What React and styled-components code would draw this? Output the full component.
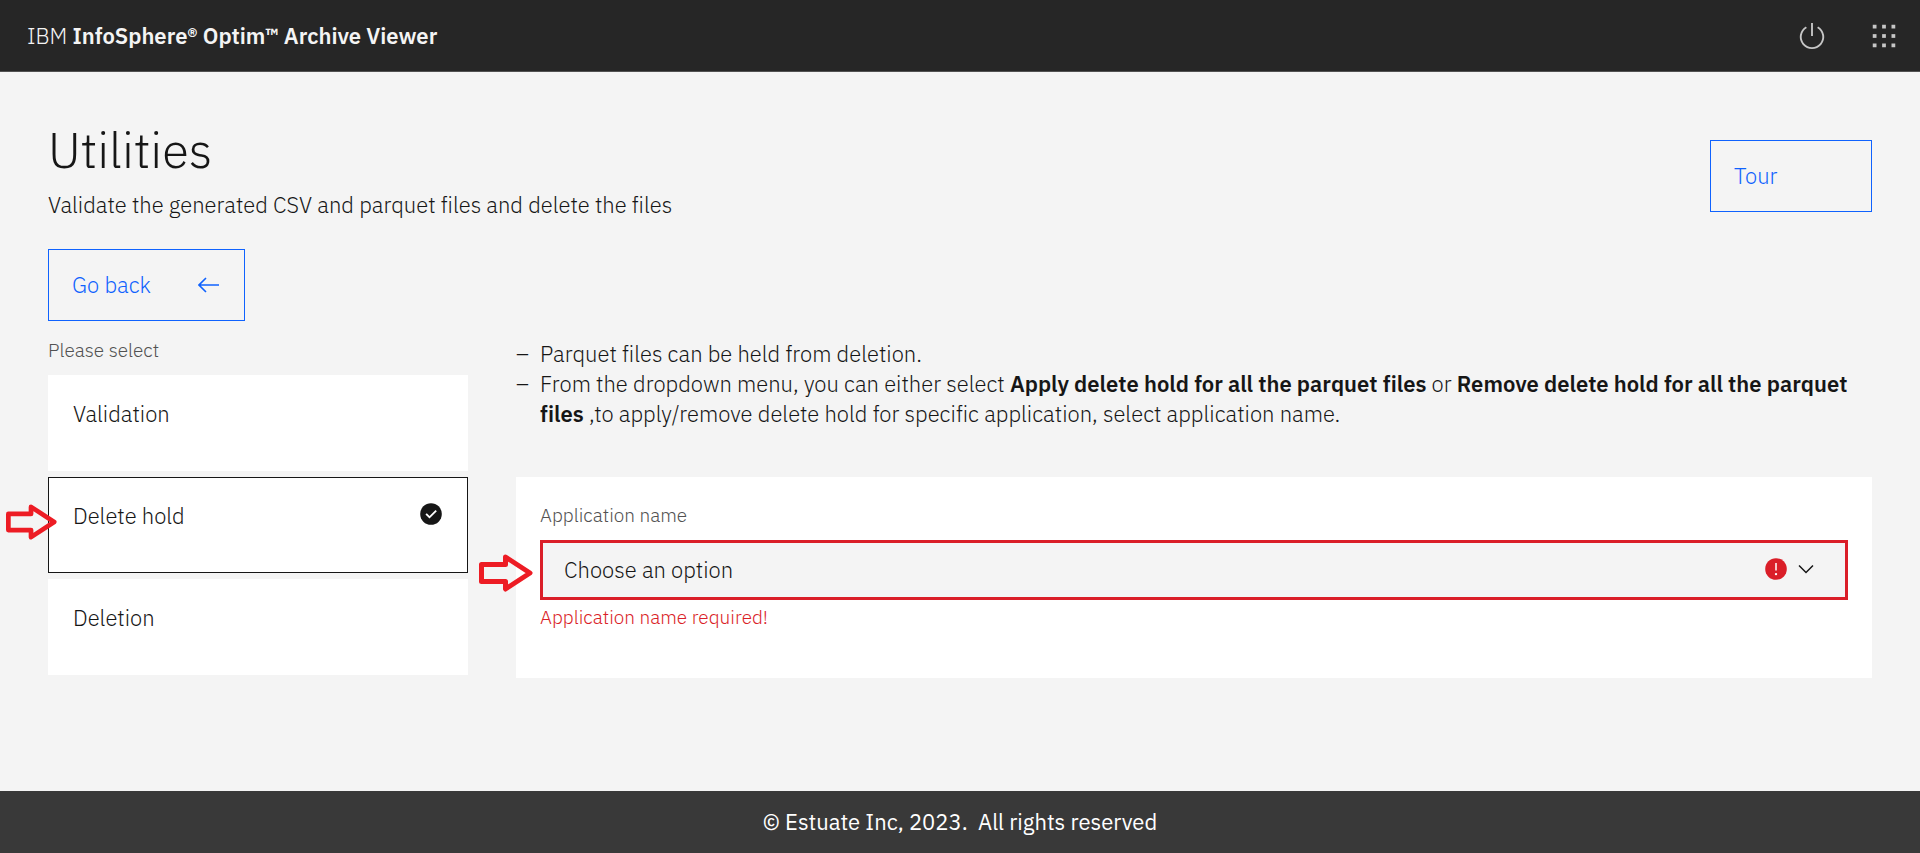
import React, { useState } from 'react';
import styled, { createGlobalStyle } from 'styled-components';

const GlobalStyle = createGlobalStyle`
  *, *::before, *::after { box-sizing: border-box; }
  body {
    margin: 0;
    background: #f4f4f4;
    color: #161616;
    font-family: "IBM Plex Sans", "Open Sans", "Noto Sans", sans-serif;
    font-size: 22px;
    font-weight: 300;
    line-height: 30px;
    font-variant-ligatures: none;
  }
  button, select { font: inherit; color: inherit; }
`;

const Page = styled.div`
  min-height: 100vh;
  display: flex;
  flex-direction: column;
`;

const Header = styled.header`
  display: flex;
  align-items: center;
  justify-content: space-between;
  height: 72px;
  padding-left: 27px;
  background: #262626;
  border-bottom: 1px solid #525252;
  color: #f4f4f4;
`;

const Product = styled.a`
  color: inherit;
  text-decoration: none;
`;

const Strong = styled.strong`
  font-weight: 600;
`;

const HeaderActions = styled.div`
  display: flex;
`;

const HeaderButton = styled.button`
  display: flex;
  align-items: center;
  justify-content: center;
  width: 72px;
  height: 72px;
  padding: 0;
  border: 0;
  background: transparent;
  color: #c6c6c6;
`;

const Main = styled.main`
  flex: 1;
  padding: 48px 48px 72px;
`;

const Intro = styled.div`
  display: flex;
  align-items: flex-start;
  justify-content: space-between;
  margin-bottom: 29px;
`;

const Title = styled.h1`
  margin: 0 0 10px;
  font-size: 49px;
  font-weight: 300;
  line-height: 60px;
`;

const Text = styled.p`
  margin: 0;
`;

const OutlineButton = styled.button`
  display: flex;
  align-items: center;
  justify-content: space-between;
  width: ${(p) => p.$width};
  height: 72px;
  margin-top: ${(p) => p.$top || '0'};
  padding: 0 25px 0 23px;
  border: 1px solid #0f62fe;
  background: transparent;
  color: #0f62fe;
`;

const Columns = styled.div`
  display: grid;
  grid-template-columns: repeat(16, minmax(0, 1fr));
  column-gap: 48px;
  margin-top: 18px;
`;

const TileGroup = styled.fieldset`
  grid-column: span 4;
  min-width: 0;
  margin: 0;
  padding: 0;
  border: 0;
`;

const Caption = styled.legend`
  margin-bottom: 14px;
  padding: 0;
  color: #525252;
  font-size: 19px;
  line-height: 22px;
`;

const Tiles = styled.div`
  display: grid;
  gap: 6px;
`;

const Tile = styled.label`
  position: relative;
  display: flex;
  align-items: flex-start;
  justify-content: space-between;
  height: 96px;
  padding: 24px;
  border: 1px solid ${(p) => (p.$selected ? '#161616' : '#ffffff')};
  background: #ffffff;
  line-height: 28px;
  cursor: pointer;
`;

const TileRadio = styled.input`
  position: absolute;
  inset: 0;
  margin: 0;
  opacity: 0;
`;

const Details = styled.section`
  grid-column: span 12;
`;

const Notes = styled.ul`
  margin: 0 0 48px;
  padding: 0;
  list-style: none;
`;

const Note = styled.li`
  display: grid;
  grid-template-columns: 24px 1fr;

  &::before { content: "–"; }
`;

const Panel = styled.div`
  padding: 27px 24px 38px;
  background: #ffffff;
`;

const FieldLabel = styled.label`
  display: block;
  margin-bottom: 14px;
  color: #525252;
  font-size: 19px;
  line-height: 22px;
`;

const Field = styled.div`
  position: relative;
`;

const Select = styled.select`
  display: block;
  width: 100%;
  height: 60px;
  padding: 0 96px 0 21px;
  border: 3px solid #da1e28;
  border-radius: 0;
  outline: 0;
  background: #f4f4f4;
  appearance: none;
`;

const FieldIcons = styled.div`
  position: absolute;
  top: 0;
  right: 30px;
  display: flex;
  align-items: center;
  gap: 6px;
  height: 58px;
  pointer-events: none;
`;

const FieldError = styled.p`
  margin: 6px 0 0;
  padding-bottom: 12px;
  color: #da1e28;
  font-size: 19px;
  line-height: 22px;
`;

const Pointer = styled.svg`
  position: absolute;
  top: ${(p) => p.$top};
  left: ${(p) => p.$left};
  pointer-events: none;
`;

const Footer = styled.footer`
  padding: 16px 24px;
  background: #393939;
  color: #ffffff;
  font-weight: 400;
  text-align: center;
  white-space: pre-wrap;
`;

const PowerIcon = () => (
  <svg width="30" height="30" viewBox="0 0 32 32" fill="currentColor" aria-hidden="true">
    <path d="M22.5 5.74l-1 1.73a11 11 0 1 1-11 0l-1-1.73a13 13 0 1 0 13 0Z" />
    <path d="M15 2h2v14h-2z" />
  </svg>
);

const SwitcherIcon = () => (
  <svg width="30" height="30" viewBox="0 0 32 32" fill="currentColor" aria-hidden="true">
    {[4, 14, 24].map((y) =>
      [4, 14, 24].map((x) => <rect key={`${x}-${y}`} x={x} y={y} width="4" height="4" />)
    )}
  </svg>
);

const BackIcon = () => (
  <svg width="21" height="16" viewBox="0 0 21 16" fill="none" stroke="currentColor" strokeWidth="1.6" aria-hidden="true">
    <path d="M8 1L1 8l7 7M1 8h20" />
  </svg>
);

const CheckIcon = () => (
  <svg width="24" height="24" viewBox="0 0 16 16" aria-hidden="true">
    <circle cx="8" cy="8" r="7.2" fill="#161616" />
    <path d="M7 11L4.3 8.3l.9-.8L7 9.3l4-3.9.9.8z" fill="#fff" />
  </svg>
);

const WarningIcon = () => (
  <svg width="24" height="24" viewBox="0 0 16 16" aria-hidden="true">
    <circle cx="8" cy="8" r="7.2" fill="#da1e28" />
    <path d="M7.5 4h1v5h-1z" fill="#fff" />
    <circle cx="8" cy="11.4" r=".8" fill="#fff" />
  </svg>
);

const ChevronIcon = () => (
  <svg width="24" height="24" viewBox="0 0 16 16" fill="currentColor" aria-hidden="true">
    <path d="M8 11L3 6l.7-.7L8 9.6l4.3-4.3.7.7z" />
  </svg>
);

const PointerArrow = ({ top, left, width, height }) => (
  <Pointer $top={top} $left={left} width={width} height={height} viewBox="0 0 54 38" fill="none" stroke="#ed1c24" strokeWidth="5" strokeLinejoin="round" aria-hidden="true">
    <path d="M2.5 10.5h24V3L51 19 26.5 35v-7.5h-24z" />
  </Pointer>
);

const OPTIONS = ['Validation', 'Delete hold', 'Deletion'];

export default function App() {
  const [selected, setSelected] = useState('Delete hold');

  return (
    <Page>
      <GlobalStyle />
      <Header>
        <Product href="#">
          IBM <Strong>InfoSphere® Optim™ Archive Viewer</Strong>
        </Product>
        <HeaderActions>
          <HeaderButton type="button" aria-label="Log out"><PowerIcon /></HeaderButton>
          <HeaderButton type="button" aria-label="Applications"><SwitcherIcon /></HeaderButton>
        </HeaderActions>
      </Header>

      <Main>
        <Intro>
          <div>
            <Title>Utilities</Title>
            <Text>Validate the generated CSV and parquet files and delete the files</Text>
          </div>
          <OutlineButton type="button" $width="162px" $top="20px">Tour</OutlineButton>
        </Intro>
        <OutlineButton type="button" $width="197px">Go back <BackIcon /></OutlineButton>

        <Columns>
          <TileGroup>
            <Caption>Please select</Caption>
            <Tiles>
              {OPTIONS.map((name) => (
                <Tile key={name} $selected={selected === name}>
                  <TileRadio
                    type="radio"
                    name="utility"
                    value={name}
                    checked={selected === name}
                    onChange={() => setSelected(name)}
                  />
                  <span>{name}</span>
                  {selected === name && <CheckIcon />}
                  {name === 'Delete hold' && (
                    <PointerArrow top="26px" left="-43px" width="51" height="36" />
                  )}
                </Tile>
              ))}
            </Tiles>
          </TileGroup>

          <Details>
            <Notes>
              <Note><span>Parquet files can be held from deletion.</span></Note>
              <Note>
                <span>
                  From the dropdown menu, you can either select{' '}
                  <Strong>Apply delete hold for all the parquet files</Strong> or{' '}
                  <Strong>Remove delete hold for all the parquet files</Strong>{' '}
                  ,to apply/remove delete hold for specific application, select application name.
                </span>
              </Note>
            </Notes>
            <Panel>
              <FieldLabel htmlFor="application">Application name</FieldLabel>
              <Field>
                <Select id="application" aria-invalid="true" aria-describedby="application-error">
                  <option>Choose an option</option>
                </Select>
                <FieldIcons><WarningIcon /><ChevronIcon /></FieldIcons>
                <PointerArrow top="14px" left="-61px" width="54" height="38" />
              </Field>
              <FieldError id="application-error">Application name required!</FieldError>
            </Panel>
          </Details>
        </Columns>
      </Main>

      <Footer>© Estuate Inc, 2023.{'  '}All rights reserved</Footer>
    </Page>
  );
}
